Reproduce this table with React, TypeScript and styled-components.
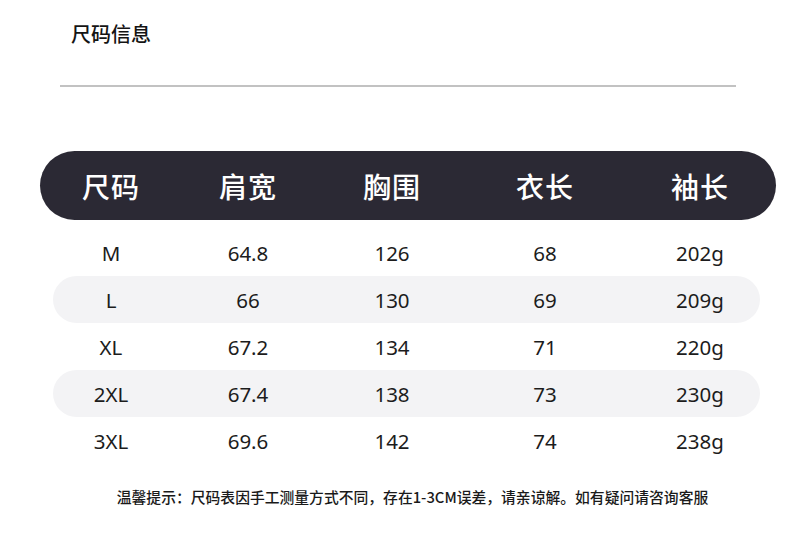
import styled, { createGlobalStyle } from 'styled-components';

const GlobalStyle = createGlobalStyle`
  body {
    margin: 0;
    background: #ffffff;
    font-family: "Noto Sans CJK SC", "Noto Sans", sans-serif;
  }
`;

const Page = styled.main`
  width: 800px;
  height: 558px;
  overflow: hidden;
  display: flex;
  flex-direction: column;
`;

const Title = styled.h1`
  margin: 20px 0 0 71px;
  font-size: 20px;
  line-height: 28px;
  font-weight: 500;
  color: #141414;
`;

const Divider = styled.hr`
  margin: 37px 0 0 60px;
  width: 676px;
  height: 2px;
  border: none;
  background: #c2c2c2;
`;

const Table = styled.section`
  margin: 64px 0 0 40px;
  width: 736px;
  display: flex;
  flex-direction: column;
`;

const columns = '116px 158px 130px 176px 134px';

const HeaderBar = styled.div`
  height: 69px;
  padding-left: 13px;
  display: grid;
  grid-template-columns: ${columns};
  align-items: center;
  background: #2b2934;
  border-radius: 35px;
  margin-bottom: 9px;
`;

const HeaderCell = styled.div`
  text-align: center;
  color: #ffffff;
  font-size: 28px;
  font-weight: 500;
  letter-spacing: 1px;
`;

const Row = styled.div<{ $striped: boolean }>`
  height: 47px;
  margin: 0 16px 0 13px;
  display: grid;
  grid-template-columns: ${columns};
  align-items: center;
  border-radius: 24px;
  background: ${(p) => (p.$striped ? '#f3f3f5' : 'transparent')};
`;

const Cell = styled.div`
  text-align: center;
  color: #1c1c1c;
  font-family: "Noto Sans", "Noto Sans CJK SC", sans-serif;
  font-size: 20.5px;
`;

const Note = styled.p`
  margin: 22px 0 0;
  text-align: center;
  font-size: 14.8px;
  font-weight: 500;
  color: #1a1a1a;
  padding-left: 25px;
`;

const headers = ['尺码', '肩宽', '胸围', '衣长', '袖长'];

const rows = [
  ['M', '64.8', '126', '68', '202g'],
  ['L', '66', '130', '69', '209g'],
  ['XL', '67.2', '134', '71', '220g'],
  ['2XL', '67.4', '138', '73', '230g'],
  ['3XL', '69.6', '142', '74', '238g'],
];

export default function App() {
  return (
    <Page>
      <GlobalStyle />
      <Title>尺码信息</Title>
      <Divider />
      <Table>
        <HeaderBar>
          {headers.map((h) => (
            <HeaderCell key={h}>{h}</HeaderCell>
          ))}
        </HeaderBar>
        {rows.map((r, i) => (
          <Row key={r[0]} $striped={i % 2 === 1}>
            {r.map((c, j) => (
              <Cell key={j}>{c}</Cell>
            ))}
          </Row>
        ))}
      </Table>
      <Note>温馨提示：尺码表因手工测量方式不同，存在1-3CM误差，请亲谅解。如有疑问请咨询客服</Note>
    </Page>
  );
}
